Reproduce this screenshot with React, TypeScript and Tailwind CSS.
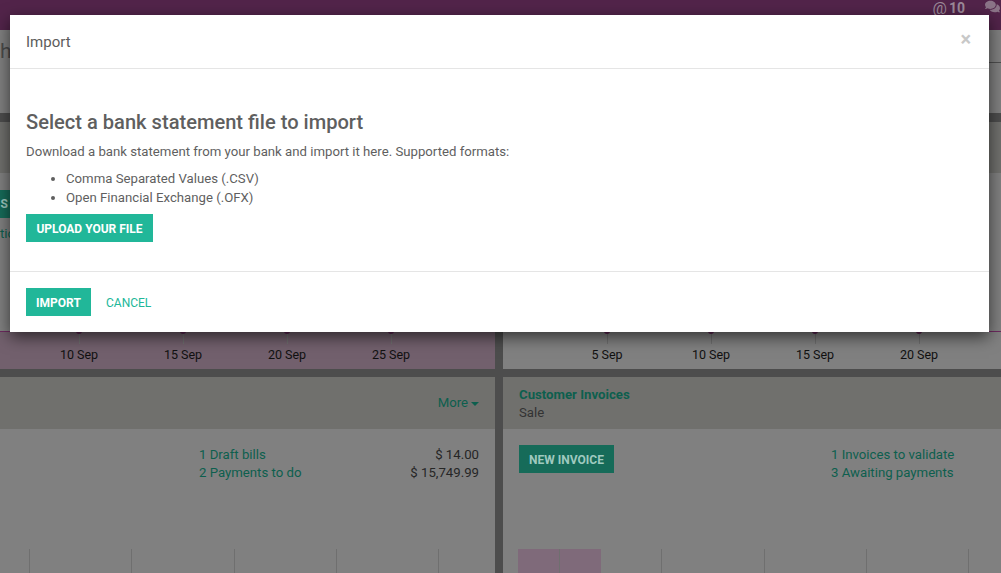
import { FaComments } from 'react-icons/fa';

const leftTicks = ['10 Sep', '15 Sep', '20 Sep', '25 Sep'];
const rightTicks = ['5 Sep', '10 Sep', '15 Sep', '20 Sep'];

function TickRow({ ticks, offset }: { ticks: string[]; offset: string }) {
  return (
    <div className={`flex h-[38px] border-t border-[#6d2a5f] ${offset}`}>
      {ticks.map((t) => (
        <div key={t} className="relative flex w-[104px] flex-col items-center">
          <span className="absolute top-[-4px] h-[6px] w-[6px] rounded-full bg-[#5a2350]" />
          <span className="h-[12px] w-px bg-[#6f6f6f]" />
          <span className="mt-[3px] text-[12.5px] leading-[16px] text-[#111]">{t}</span>
        </div>
      ))}
    </div>
  );
}

function BarCell({ children }: { children?: React.ReactNode }) {
  return <div className="h-full w-[102.3px] shrink-0 border-l border-[#6f6f6f]">{children}</div>;
}

export default function App() {
  return (
    <div className="relative h-[573px] w-[1001px] overflow-hidden bg-[#4d4d4d] font-['Roboto',sans-serif] text-[13.2px]">
      {/* dimmed page behind the dialog */}
      <header className="flex h-[30px] items-start justify-end bg-[#52244a] pr-[1px] text-[#9c8a99]">
        <span className="text-[16px] leading-[17px]">@</span>
        <span className="ml-[2px] text-[14px] font-bold leading-[16px]">10</span>
        <FaComments className="ml-[20px] mt-[-1px] text-[15px] text-[#8b7488]" />
      </header>

      <div className="h-[83px] bg-[#808080]">
        <div className="flex h-[32px] items-start justify-between">
          <span className="mt-[7px] text-[21px] leading-[28px] text-[#4a4a4a]">h</span>
          <span className="mt-[32px] h-px w-[60px] bg-[#4f4f4f]" />
        </div>
      </div>

      <div className="mt-[9px] flex gap-[8px]">
        <section className="w-[495px] bg-[#808080]">
          <div className="h-[51px] bg-[#70706d]" />
          <div className="flex h-[158px] flex-col">
            <div className="mt-[17px] flex h-[28px] w-[30px] items-center justify-end overflow-hidden bg-[#166b59] pr-[22px] text-[12px] font-bold text-[#9fc9bf]">
              S
            </div>
            <span className="mt-[6px] text-[#0d5f4e]">tio</span>
          </div>
          <div className="h-[38px] bg-[#72606d]">
            <TickRow ticks={leftTicks} offset="pl-[27px]" />
          </div>
        </section>
        <section className="min-w-0 flex-1 bg-[#808080]">
          <div className="h-[51px] bg-[#70706d]" />
          <div className="h-[158px]" />
          <TickRow ticks={rightTicks} offset="pl-[52px]" />
        </section>
      </div>

      <div className="mt-[8px] flex gap-[8px]">
        <section className="flex h-[196px] w-[495px] flex-col bg-[#808080]">
          <div className="flex h-[52px] items-center justify-end bg-[#70706d] pr-[16px] text-[13.2px] text-[#0d5f4e]">
            More
            <span className="ml-[3px] mt-[1px] h-0 w-0 border-x-[4px] border-t-[4px] border-x-transparent border-t-[#0d5f4e]" />
          </div>
          <div className="flex pl-[199px] pr-[16px] pt-[17px] leading-[18px]">
            <div className="flex-1 text-[#0d5f4e]">
              <p>1 Draft bills</p>
              <p>2 Payments to do</p>
            </div>
            <div className="text-right text-[#262626]">
              <p>$ 14.00</p>
              <p>$ 15,749.99</p>
            </div>
          </div>
          <div className="mt-auto flex h-[24px] pl-[29px]">
            {[0, 1, 2, 3, 4].map((i) => (
              <BarCell key={i} />
            ))}
          </div>
        </section>

        <section className="flex h-[196px] min-w-0 flex-1 flex-col bg-[#808080]">
          <div className="h-[52px] bg-[#70706d] pl-[16px] pt-[9px] leading-[18px]">
            <p className="font-bold text-[#0d5f4e]">Customer Invoices</p>
            <p className="text-[#333]">Sale</p>
          </div>
          <div className="flex pl-[16px] pt-[16px] leading-[18px]">
            <button className="h-[28px] w-[95px] bg-[#166b59] pt-[1px] text-[12px] font-bold text-[#9fc9bf]">NEW INVOICE</button>
            <div className="ml-[217px] pt-[1px] text-[#0d5f4e]">
              <p>1 Invoices to validate</p>
              <p>3 Awaiting payments</p>
            </div>
          </div>
          <div className="mt-auto flex h-[24px] pl-[15px]">
            <div className="h-full w-[41px] shrink-0 bg-[#7f6a7a]" />
            <BarCell>
              <div className="h-full w-[41px] bg-[#7f6a7a]" />
            </BarCell>
            <BarCell />
            <BarCell />
            <BarCell />
            <BarCell />
          </div>
        </section>
      </div>

      {/* dialog */}
      <div className="absolute left-[10px] top-[15px] flex h-[317px] w-[979px] flex-col bg-white text-[#5f5f5f] shadow-[0_5px_15px_rgba(0,0,0,0.6)]">
        <div className="flex h-[54px] items-center justify-between border-b border-[#e5e5e5] pl-[16px] pr-[18px]">
          <h4 className="pt-[1px] text-[15px] text-[#5c5c5c]">Import</h4>
          <span className="mt-[-5px] text-[20px] font-bold leading-none text-[#c8c8c8]">×</span>
        </div>
        <div className="h-[203px] border-b border-[#e5e5e5] pl-[16px] pt-[39px]">
          <h3 className="text-[20.1px] font-medium leading-[28px] text-[#5f5f5f]">Select a bank statement file to import</h3>
          <p className="mt-[7px] leading-[18px]">
            Download a bank statement from your bank and import it here. Supported formats:
          </p>
          <ul className="mt-[8px] list-disc pl-[40px] leading-[19px]">
            <li>Comma Separated Values (.CSV)</li>
            <li>Open Financial Exchange (.OFX)</li>
          </ul>
          <button className="mt-[7px] block h-[28px] w-[127px] bg-[#21b799] pt-[1px] text-[12px] font-bold text-white">
            UPLOAD YOUR FILE
          </button>
        </div>
        <div className="flex items-start pl-[16px] pt-[16px]">
          <button className="h-[28px] w-[65px] bg-[#21b799] pt-[1px] text-[12px] font-bold text-white">IMPORT</button>
          <button className="ml-[15px] h-[28px] pt-[1px] text-[12px] text-[#21b799]">CANCEL</button>
        </div>
      </div>
    </div>
  );
}
